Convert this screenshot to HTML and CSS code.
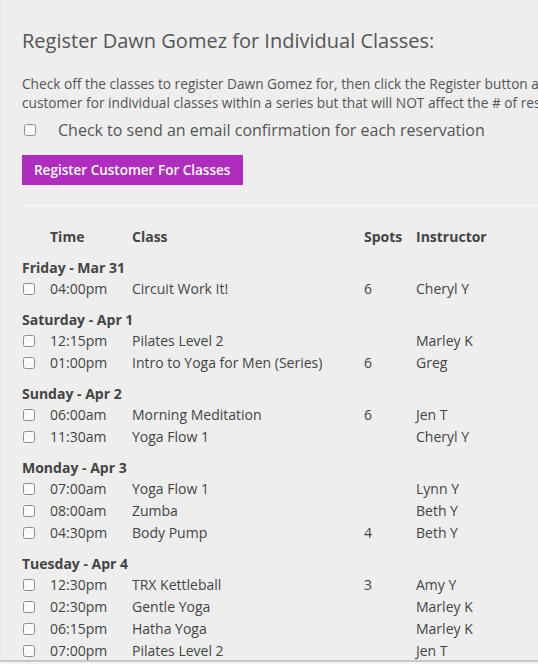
FILE: index.html
```html
<!DOCTYPE html>
<html>
<head>
<meta charset="utf-8">
<link rel="stylesheet" href="styles.css">
</head>
<body>
<div class="panel">
  <h2 class="title">Register Dawn Gomez for Individual Classes:</h2>
  <p class="intro">Check off the classes to register Dawn Gomez for, then click the Register button at the bottom. You can register the<br>customer for individual classes within a series but that will NOT affect the # of reservations for the series.</p>
  <label class="email"><input type="checkbox" class="cb"><span>Check to send an email confirmation for each reservation</span></label>
  <button class="btn">Register Customer For Classes</button>
  <hr class="rule">
  <div class="sched">
    <div class="row head"><span></span><span>Time</span><span>Class</span><span>Spots</span><span>Instructor</span></div>

    <div class="day">Friday - Mar 31</div>
    <div class="row"><input type="checkbox" class="cb"><span>04:00pm</span><span>Circuit Work It!</span><span>6</span><span>Cheryl Y</span></div>

    <div class="day">Saturday - Apr 1</div>
    <div class="row"><input type="checkbox" class="cb"><span>12:15pm</span><span>Pilates Level 2</span><span></span><span>Marley K</span></div>
    <div class="row"><input type="checkbox" class="cb"><span>01:00pm</span><span>Intro to Yoga for Men (Series)</span><span>6</span><span>Greg</span></div>

    <div class="day">Sunday - Apr 2</div>
    <div class="row"><input type="checkbox" class="cb"><span>06:00am</span><span>Morning Meditation</span><span>6</span><span>Jen T</span></div>
    <div class="row"><input type="checkbox" class="cb"><span>11:30am</span><span>Yoga Flow 1</span><span></span><span>Cheryl Y</span></div>

    <div class="day">Monday - Apr 3</div>
    <div class="row"><input type="checkbox" class="cb"><span>07:00am</span><span>Yoga Flow 1</span><span></span><span>Lynn Y</span></div>
    <div class="row"><input type="checkbox" class="cb"><span>08:00am</span><span>Zumba</span><span></span><span>Beth Y</span></div>
    <div class="row"><input type="checkbox" class="cb"><span>04:30pm</span><span>Body Pump</span><span>4</span><span>Beth Y</span></div>

    <div class="day">Tuesday - Apr 4</div>
    <div class="row"><input type="checkbox" class="cb"><span>12:30pm</span><span>TRX Kettleball</span><span>3</span><span>Amy Y</span></div>
    <div class="row"><input type="checkbox" class="cb"><span>02:30pm</span><span>Gentle Yoga</span><span></span><span>Marley K</span></div>
    <div class="row"><input type="checkbox" class="cb"><span>06:15pm</span><span>Hatha Yoga</span><span></span><span>Marley K</span></div>
    <div class="row"><input type="checkbox" class="cb"><span>07:00pm</span><span>Pilates Level 2</span><span></span><span>Jen T</span></div>
  </div>
</div>
</body>
</html>
```
FILE: styles.css
```css
html, body {
  margin: 0;
  padding: 0;
  overflow: hidden;
  background: #f4f4f4;
}
body {
  font-family: "Open Sans", "Liberation Sans", sans-serif;
  color: #444;
  width: 538px;
  height: 664px;
}
.panel {
  background: #eeeeee;
  height: 662px;
  border-bottom: 2px solid #c8c8c8;
  border-left: 1px solid #e6e6e6;
  box-sizing: border-box;
  padding: 27px 0 0 21px;
  overflow: hidden;
}
.title {
  margin: 0;
  font-size: 20px;
  font-weight: 400;
  line-height: 28px;
  color: #555;
}
.intro {
  margin: 19px 0 0 0;
  font-size: 13.7px;
  line-height: 19px;
  white-space: nowrap;
  color: #555;
}
.email {
  display: flex;
  align-items: center;
  margin-top: 7px;
  font-size: 16px;
  line-height: 22px;
  color: #555;
}
.email .cb {
  margin: 0 22px 0 2px;
}
.cb {
  width: 12px;
  height: 12px;
  margin: 0;
  opacity: 0.8;
}
.btn {
  display: block;
  margin-top: 14px;
  background: #b02cbf;
  color: #fff;
  border: none;
  font-family: "Open Sans", "Liberation Sans", sans-serif;
  font-size: 13.5px;
  font-weight: 600;
  height: 30px;
  padding: 0 12px;
  width: 221px;
  text-align: left;
  white-space: nowrap;
}
.rule {
  margin: 20px 0 0 0;
  border: none;
  border-top: 1px solid #fafafa;
  height: 0;
}
.sched {
  margin-top: 20px;
  font-size: 14px;
}
.row {
  display: grid;
  grid-template-columns: 28px 82px 232px 52px 1fr;
  align-items: center;
  height: 22px;
  line-height: 22px;
}
.row .cb {
  margin-left: 1px;
}
.head {
  font-weight: 700;
  color: #444;
}
.day {
  font-weight: 700;
  margin-top: 10px;
  line-height: 20px;
  height: 20px;
  color: #444;
}
```
